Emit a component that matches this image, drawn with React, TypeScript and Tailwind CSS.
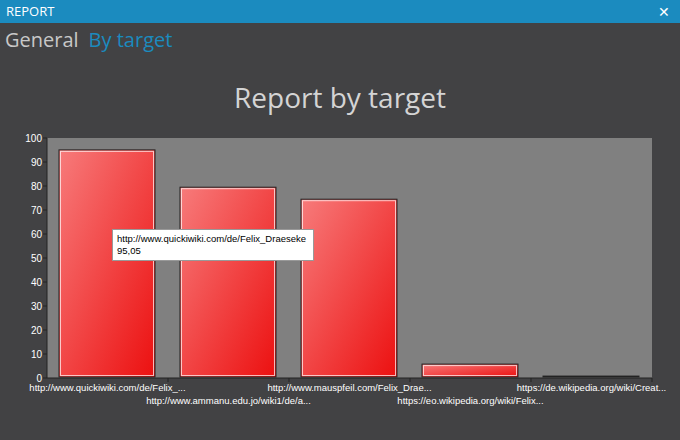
export default function App() {
  const bars = [
    { v: 95.05, label: "http://www.quickiwiki.com/de/Felix_...", row: 0 },
    { v: 79.5, label: "http://www.ammanu.edu.jo/wiki1/de/a...", row: 1 },
    { v: 74.5, label: "http://www.mauspfeil.com/Felix_Drae...", row: 0 },
    { v: 5.8, label: "https://eo.wikipedia.org/wiki/Felix...", row: 1 },
    { v: 0.8, label: "https://de.wikipedia.org/wiki/Creat...", row: 0 },
  ];
  const x0 = 47, x1 = 652, y0 = 138, y1 = 378;
  const slot = (x1 - x0) / 5;
  const yOf = (v: number) => y1 - (v / 100) * (y1 - y0);
  return (
    <div className="w-[680px] h-[440px] bg-[#424244] flex flex-col overflow-hidden" style={{ fontFamily: '"Open Sans", "Noto Sans", sans-serif' }}>
      <div className="h-[23px] bg-[#1b8bbf] flex items-center justify-between px-[6px] text-white text-[13px]">
        <span>REPORT</span>
        <span className="text-[14px] pr-[4px]">✕</span>
      </div>
      <div className="h-[31px] flex gap-[10px] px-[5px] pt-[3px] text-[20px] leading-[28px]">
        <span className="text-[#c8c8c8]">General</span>
        <span className="text-[#1b8bbf]">By target</span>
      </div>
      <div className="relative flex-1">
        <svg width="680" height="386" viewBox="0 54 680 386" className="absolute left-0 top-0">
          <defs>
            <linearGradient id="g" x1="0" y1="0" x2="1" y2="1">
              <stop offset="0" stopColor="#f77b7b" />
              <stop offset="1" stopColor="#ec1010" />
            </linearGradient>
          </defs>
          <text x="340" y="108" textAnchor="middle" fill="#d4d4d4" fontSize="28">Report by target</text>
          <rect x={x0} y={y0} width={x1 - x0} height={y1 - y0} fill="#808080" />
          <line x1={x0} y1={y0} x2={x0} y2={y1} stroke="#222" />
          <line x1={x0} y1={y1} x2={x1} y2={y1} stroke="#222" />
          <g fontFamily='"Liberation Sans", Arial, sans-serif'>
            {[0, 10, 20, 30, 40, 50, 60, 70, 80, 90, 100].map((t) => (
              <g key={t}>
                <line x1={x0 - 4} x2={x0} y1={yOf(t)} y2={yOf(t)} stroke="#222" />
                <text x={x0 - 5} y={yOf(t) + 4} textAnchor="end" fill="#fff" fontSize="10">{t}</text>
              </g>
            ))}
            {bars.map((b, i) => {
              const bx = x0 + i * slot + 12;
              const cx = x0 + i * slot + slot / 2;
              const top = yOf(b.v);
              return (
                <g key={i}>
                  <line x1={x0 + (i + 1) * slot} x2={x0 + (i + 1) * slot} y1={y1} y2={y1 + 4} stroke="#222" />
                  <rect x={bx} y={top} width={96} height={y1 - top - 1} fill="url(#g)" stroke="#222" />
                  <rect x={bx + 1.5} y={top + 1.5} width={93} height={Math.max(y1 - top - 4, 0)} fill="none" stroke="#fff" strokeOpacity="0.7" />
                  <text x={cx} y={b.row ? 404 : 391} textAnchor="middle" fill="#fff" fontSize="9.5">{b.label}</text>
                </g>
              );
            })}
          </g>
        </svg>
        <div className="absolute left-[112px] top-[175px] w-[202px] h-[32px] bg-white border border-[#999] text-[9.5px] leading-[12px] text-black px-[4px] pt-[3px]" style={{ fontFamily: '"Liberation Sans", Arial, sans-serif' }}>
          <div>http://www.quickiwiki.com/de/Felix_Draeseke</div>
          <div>95,05</div>
        </div>
      </div>
    </div>
  );
}
